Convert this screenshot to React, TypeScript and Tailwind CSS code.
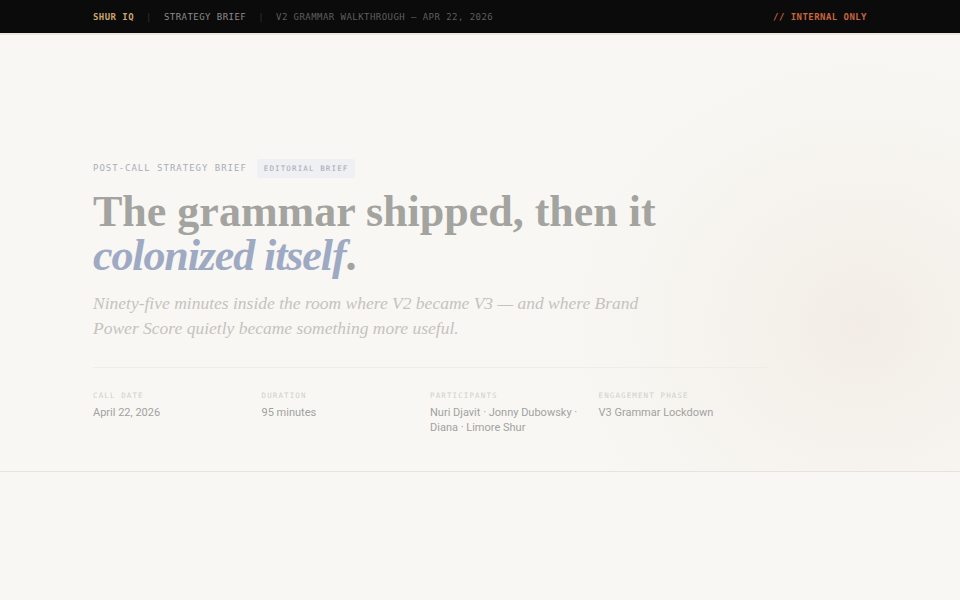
export default function App() {
  const mono = { fontFamily: '"DejaVu Sans Mono", "Liberation Mono", monospace' }
  const serif = { fontFamily: '"Liberation Serif", "DejaVu Serif", serif' }
  const meta = [
    { label: 'Call Date', value: 'April 22, 2026' },
    { label: 'Duration', value: '95 minutes' },
    { label: 'Participants', value: 'Nuri Djavit · Jonny Dubowsky · Diana · Limore Shur' },
    { label: 'Engagement Phase', value: 'V3 Grammar Lockdown' },
  ]

  return (
    <div className="min-h-screen bg-[#f8f7f3] flex flex-col">
      <header className="h-[35px] bg-[#0b0b0b] border-b-2 border-[#ebe7dc] flex items-center pt-[2px] px-[93px] text-[9px] tracking-[0.05em]" style={mono}>
        <span className="text-[#c9a56d] font-bold">SHUR IQ</span>
        <span className="text-[#333] mx-[12px]">|</span>
        <span className="text-[#8c8c8c]">STRATEGY BRIEF</span>
        <span className="text-[#333] mx-[12px]">|</span>
        <span className="text-[#5e5e5e]">V2 GRAMMAR WALKTHROUGH — APR 22, 2026</span>
        <span className="ml-auto text-[#c8653d] font-bold">// INTERNAL ONLY</span>
      </header>

      <section className="relative overflow-hidden border-b border-[#e6e4de] pt-[124px] pb-[35px] px-[93px]">
        <div className="absolute right-[-200px] top-[10px] w-[600px] h-[560px] rounded-full bg-[radial-gradient(closest-side,rgba(240,232,224,0.7)_0%,rgba(244,239,233,0.4)_55%,rgba(248,247,243,0)_100%)]" />
        <div className="relative w-[674px]">
          <div className="flex items-center gap-[10px]">
            <span className="text-[9px] tracking-[0.11em] text-[#a9adb9]" style={mono}>POST-CALL STRATEGY BRIEF</span>
            <span className="bg-[#eef0f3] text-[#a3a9b6] text-[7.5px] tracking-[0.15em] px-[7px] py-[4px] rounded-[2px]" style={mono}>EDITORIAL BRIEF</span>
          </div>

          <h1 className="mt-[12px] text-[44px] leading-[44px] font-bold text-[#a3a3a0]" style={serif}>
            The grammar shipped, then it
            <br />
            <em className="text-[#9ea9c3] tracking-[-0.025em]">colonized itself</em>.
          </h1>

          <p className="mt-[13px] w-[580px] text-[17.5px] leading-[25px] italic text-[#c5c3be]" style={serif}>
            Ninety-five minutes inside the room where V2 became V3 — and where Brand Power Score quietly became something more useful.
          </p>

          <div className="mt-[26px] border-t border-[#eeede8] pt-[22px] grid grid-cols-4">
            {meta.map(m => (
              <div key={m.label} className="pr-[12px]">
                <div className="text-[7.5px] tracking-[0.15em] uppercase text-[#d0d0cc]" style={mono}>{m.label}</div>
                <div className="mt-[3px] text-[11px] leading-[15.5px] text-[#a2a2a0]" style={{ fontFamily: 'Roboto, "Liberation Sans", sans-serif' }}>{m.value}</div>
              </div>
            ))}
          </div>
        </div>
      </section>

      <div className="flex-1" />
    </div>
  )
}
